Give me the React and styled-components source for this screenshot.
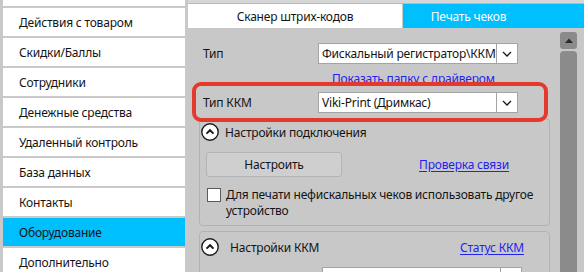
import React from 'react';
import styled, { createGlobalStyle } from 'styled-components';

const GlobalStyle = createGlobalStyle`
  html, body {
    margin: 0;
    padding: 0;
  }

  body {
    width: 584px;
    height: 272px;
    overflow: hidden;
    background: #c8c8c8;
    color: #141414;
    font-family: "Noto Sans", "Open Sans", sans-serif;
    font-size: 12px;
    letter-spacing: -0.2px;
  }
`;

const Window = styled.div`
  display: flex;
  width: 584px;
  height: 272px;
  overflow: hidden;
`;

const Sidebar = styled.nav`
  flex: 0 0 188px;
  box-sizing: border-box;
  padding: 0 3px;
  background: #c9c9c9;
  overflow: hidden;
`;

const MenuList = styled.ul`
  display: flex;
  flex-direction: column;
  gap: 2px;
  margin: 0;
  padding: 0;
  list-style: none;
`;

const MenuItem = styled.li`
  display: flex;
  align-items: center;
  height: ${({ $partial }) => ($partial ? '6px' : '28px')};
  padding-left: 16px;
  background: ${({ $active }) => ($active ? '#00bfff' : '#ffffff')};
  white-space: nowrap;
`;

const Main = styled.section`
  flex: 1;
  display: flex;
  flex-direction: column;
  min-width: 0;
`;

const TabBar = styled.div`
  display: flex;
  height: 28px;
  box-sizing: border-box;
  padding-top: 3px;
  background: #d6d6d6;
`;

const Tab = styled.div`
  display: flex;
  align-items: center;
  justify-content: center;
  box-sizing: border-box;
  border-top: 1px solid #b9b9b9;
  ${({ $active }) =>
    $active
      ? `
    flex: 1;
    padding-right: 50px;
    background: #00bfff;
    color: #ffffff;
  `
      : `
    flex: 0 0 215px;
    background: #ffffff;
    border-right: 1px solid #c8c8c8;
  `}
`;

const Body = styled.div`
  flex: 1;
  display: flex;
  min-height: 0;
  background: #c8c8c8;
`;

const Scroller = styled.div`
  position: relative;
  flex: 1;
  min-width: 0;
  padding: 15px 0 0 11px;
  overflow: hidden;
`;

const Row = styled.div`
  display: flex;
  align-items: center;
  height: 21px;
  padding-left: 4px;
`;

const Label = styled.span`
  flex: 0 0 115px;
`;

const Select = styled.div`
  display: flex;
  width: 200px;
  height: 21px;
  box-sizing: border-box;
  margin-left: ${({ $offset }) => $offset || 0}px;
  border: 1px solid #a4a4a4;
  background: #ffffff;
`;

const SelectValue = styled.span`
  flex: 1;
  display: flex;
  align-items: center;
  padding-left: 3px;
  white-space: nowrap;
  overflow: hidden;
`;

const SelectButton = styled.span`
  display: flex;
  align-items: center;
  justify-content: center;
  flex: 0 0 20px;
  border-left: 1px solid #a4a4a4;
`;

const LinkRow = styled.div`
  display: flex;
  align-items: center;
  height: 28px;
  padding-left: 133px;
`;

const Link = styled.a`
  color: #2323f0;
  text-decoration: underline;
  text-underline-offset: 2px;
  white-space: nowrap;
  cursor: pointer;
  margin-left: ${({ $auto }) => ($auto ? 'auto' : '0')};
  margin-right: ${({ $right }) => $right || 0}px;
`;

const Highlight = styled.div`
  position: absolute;
  left: 4px;
  top: 54px;
  width: 356px;
  height: 40px;
  box-sizing: border-box;
  border: 4px solid #e5392c;
  border-radius: 9px;
  pointer-events: none;
`;

const Group = styled.fieldset`
  margin: 5px 10px 0 0;
  padding: ${({ $top }) => $top}px 0 6px;
  border: 1px solid #b3b3b3;
  border-radius: 4px;
  min-width: 0;
`;

const GroupHeader = styled.div`
  display: flex;
  align-items: center;
  gap: ${({ $gap }) => $gap}px;
  height: 18px;
`;

const Toggle = styled.svg`
  flex: 0 0 20px;
  display: block;
`;

const ActionRow = styled.div`
  display: flex;
  align-items: center;
  margin: 11px 0 0 6px;
`;

const Button = styled.button`
  width: 136px;
  height: 25px;
  border: 1px solid #b4b4b4;
  border-radius: 3px;
  background: #cfcfcf;
  color: #141414;
  font: inherit;
  letter-spacing: inherit;
`;

const CheckRow = styled.label`
  display: flex;
  align-items: flex-start;
  gap: 5px;
  margin: 10px 0 0 7px;
  line-height: 16px;
`;

const Box = styled.span`
  flex: 0 0 14px;
  height: 14px;
  box-sizing: border-box;
  margin-top: 1px;
  border: 1px solid #5a5a5a;
  background: #ffffff;
`;

const ScrollBar = styled.div`
  display: flex;
  flex-direction: column;
  gap: 2px;
  flex: 0 0 17px;
  margin: 4px 7px 0 0;
`;

const ScrollButton = styled.div`
  display: flex;
  align-items: center;
  justify-content: center;
  height: 17px;
  border-radius: 3px;
  background: #8b8b8b;
`;

const Thumb = styled.div`
  flex: 1;
  border-radius: 4px 4px 0 0;
  background: #8b8b8b;
`;

const Chevron = () => (
  <svg width="10" height="6" viewBox="0 0 10 6">
    <polyline points="1,1 5,5 9,1" fill="none" stroke="#1a1a1a" strokeWidth="1.3" />
  </svg>
);

const CollapseIcon = () => (
  <Toggle width="20" height="18" viewBox="0 0 20 18">
    <circle cx="10" cy="9" r="8.2" fill="#ffffff" stroke="#1a1a1a" strokeWidth="1.4" />
    <polyline points="6.5,10.6 10,7.2 13.5,10.6" fill="none" stroke="#1a1a1a" strokeWidth="2" />
  </Toggle>
);

const menu = [
  'Действия с товаром',
  'Скидки/Баллы',
  'Сотрудники',
  'Денежные средства',
  'Удаленный контроль',
  'База данных',
  'Контакты',
  'Оборудование',
  'Дополнительно',
];

const App = () => (
  <>
    <GlobalStyle />
    <Window>
      <Sidebar>
        <MenuList>
          {/* the item above is scrolled out of view, only its bottom edge shows */}
          <MenuItem $partial />
          {menu.map((item) => (
            <MenuItem key={item} $active={item === 'Оборудование'}>
              {item}
            </MenuItem>
          ))}
        </MenuList>
      </Sidebar>

      <Main>
        <TabBar>
          <Tab>Сканер штрих-кодов</Tab>
          <Tab $active>Печать чеков</Tab>
        </TabBar>

        <Body>
          <Scroller>
            <Row>
              <Label>Тип</Label>
              <Select>
                <SelectValue>Фискальный регистратор\ККМ</SelectValue>
                <SelectButton>
                  <Chevron />
                </SelectButton>
              </Select>
            </Row>
            <LinkRow>
              <Link>Показать папку с драйвером</Link>
            </LinkRow>
            <Row>
              <Label>Тип ККМ</Label>
              <Select>
                <SelectValue>Viki-Print (Дримкас)</SelectValue>
                <SelectButton>
                  <Chevron />
                </SelectButton>
              </Select>
            </Row>
            <Highlight />

            <Group $top={4}>
              <GroupHeader $gap={5}>
                <CollapseIcon />
                <span>Настройки подключения</span>
              </GroupHeader>
              <ActionRow>
                <Button type="button">Настроить</Button>
                <Link $auto $right={40}>
                  Проверка связи
                </Link>
              </ActionRow>
              <CheckRow>
                <Box />
                <span>
                  Для печати нефискальных чеков использовать другое
                  <br />
                  устройство
                </span>
              </CheckRow>
            </Group>

            <Group $top={6}>
              <GroupHeader $gap={10}>
                <CollapseIcon />
                <span>Настройки ККМ</span>
                <Link $auto $right={25}>
                  Статус ККМ
                </Link>
              </GroupHeader>
              <ActionRow>
                <Select $offset={116}>
                  <SelectValue />
                  <SelectButton />
                </Select>
              </ActionRow>
            </Group>
          </Scroller>

          <ScrollBar>
            <ScrollButton>
              <svg width="8" height="5" viewBox="0 0 8 5">
                <polygon points="0,5 4,0.5 8,5" fill="#2a2a2a" />
              </svg>
            </ScrollButton>
            <Thumb />
          </ScrollBar>
        </Body>
      </Main>
    </Window>
  </>
);

export default App;
